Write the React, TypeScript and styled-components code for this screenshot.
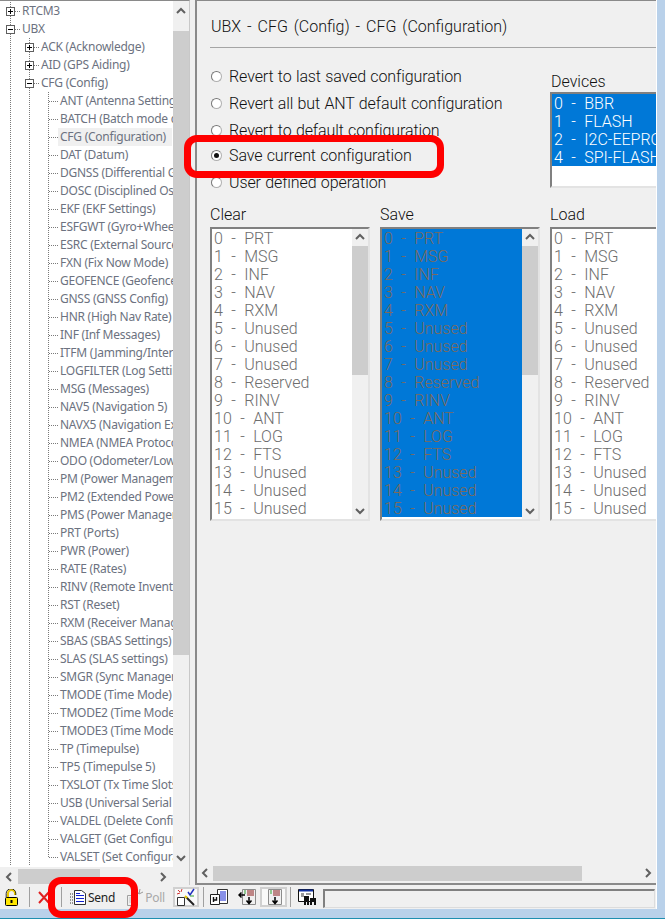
import React from 'react';
import styled, { createGlobalStyle } from 'styled-components';

const GlobalStyle = createGlobalStyle`
  html, body {
    margin: 0;
    padding: 0;
    background: #f0f0f0;
  }
  * {
    box-sizing: border-box;
  }
`;

const TREE_ITEMS = [
  'ANT (Antenna Settings)', 'BATCH (Batch mode configuration)', 'CFG (Configuration)', 'DAT (Datum)',
  'DGNSS (Differential GNSS configuration)', 'DOSC (Disciplined Oscillator)', 'EKF (EKF Settings)',
  'ESFGWT (Gyro+Wheel Tick)', 'ESRC (External Source Config)', 'FXN (Fix Now Mode)',
  'GEOFENCE (Geofence Config)', 'GNSS (GNSS Config)', 'HNR (High Nav Rate)', 'INF (Inf Messages)',
  'ITFM (Jamming/Interference)', 'LOGFILTER (Log Settings)', 'MSG (Messages)', 'NAV5 (Navigation 5)',
  'NAVX5 (Navigation Expert 5)', 'NMEA (NMEA Protocol)', 'ODO (Odometer/Low-Speed)',
  'PM (Power Management)', 'PM2 (Extended Power Management)', 'PMS (Power Management Setup)',
  'PRT (Ports)', 'PWR (Power)', 'RATE (Rates)', 'RINV (Remote Inventory)', 'RST (Reset)',
  'RXM (Receiver Manager)', 'SBAS (SBAS Settings)', 'SLAS (SLAS settings)', 'SMGR (Sync Manager)',
  'TMODE (Time Mode)', 'TMODE2 (Time Mode 2)', 'TMODE3 (Time Mode 3)', 'TP (Timepulse)',
  'TP5 (Timepulse 5)', 'TXSLOT (Tx Time Slots)', 'USB (Universal Serial Bus)',
  'VALDEL (Delete Configuration)', 'VALGET (Get Configuration)', 'VALSET (Set Configuration)',
];

const LAYERS = [
  '0 - PRT', '1 - MSG', '2 - INF', '3 - NAV', '4 - RXM', '5 - Unused', '6 - Unused', '7 - Unused',
  '8 - Reserved', '9 - RINV', '10 - ANT', '11 - LOG', '12 - FTS', '13 - Unused', '14 - Unused',
  '15 - Unused', '16 - Reserved',
];

const DEVICES = ['0 - BBR', '1 - FLASH', '2 - I2C-EEPROM', '4 - SPI-FLASH'];

const RADIOS = [
  'Revert to last saved configuration',
  'Revert all but ANT default configuration',
  'Revert to default configuration',
  'Save current configuration',
  'User defined operation',
];

const Screen = styled.div`
  position: relative;
  width: 665px;
  height: 919px;
  overflow: hidden;
  display: flex;
  flex-direction: column;
  background: #b9d1ea;
  border-bottom: 1px solid #1f8fb0;
`;

const Workspace = styled.div`
  width: 657px;
  height: 909px;
  display: flex;
  flex-direction: column;
  background: #f0f0f0;
  border-right: 1px solid #ffffff;
`;

const Panes = styled.div`
  height: 885px;
  display: flex;
`;

const TreePane = styled.div`
  width: 190px;
  display: flex;
  flex-direction: column;
  border-top: 1px solid #8a8a8a;
  border-right: 1px solid #c8c8c8;
`;

const TreeBody = styled.div`
  flex: 1;
  display: flex;
  min-height: 0;
`;

const TreeList = styled.div`
  width: 173px;
  height: 866px;
  padding: 1px 0 0 1px;
  overflow: hidden;
  background: #ffffff;
  font-family: 'Noto Sans', sans-serif;
  font-size: 12px;
  letter-spacing: -0.25px;
  color: #6c7280;
`;

const TreeRow = styled.div`
  height: 18px;
  display: flex;
  align-items: center;
  white-space: nowrap;
`;

const TreeLabel = styled.span<{ $selected?: boolean }>`
  height: 18px;
  line-height: 18px;
  padding: 0 6px 0 2px;
  background: ${({ $selected }) => ($selected ? '#f0f0f0' : 'transparent')};
`;

const ContentPane = styled.div`
  margin-left: 5px;
  width: 461px;
  display: flex;
  flex-direction: column;
  border-top: 1px solid #8a8a8a;
  border-left: 2px solid #8a8a8a;
  border-bottom: 2px solid #8a8a8a;
`;

const ContentBody = styled.div`
  flex: 1;
  min-height: 0;
  overflow: hidden;
  padding-left: 13px;
  font-family: 'Roboto', 'Liberation Sans', sans-serif;
  font-weight: 300;
  font-size: 16px;
  word-spacing: 2px;
  color: #111111;
`;

const Title = styled.div`
  height: 47px;
  padding: 16px 0 0 1px;
  line-height: 20px;
  border-bottom: 1px solid #a5a5a5;
  white-space: nowrap;
`;

const OptionsRow = styled.div`
  height: 157px;
  display: flex;
`;

const RadioGroup = styled.div`
  width: 340px;
  flex: none;
  padding-top: 15px;
  letter-spacing: -0.1px;
  word-spacing: 0.5px;
`;

const RadioRow = styled.div<{ $shift?: number }>`
  height: 27px;
  margin-top: ${({ $shift }) => $shift ?? 0}px;
  display: flex;
  align-items: center;
  gap: 7px;
  padding-left: 1px;
  white-space: nowrap;
`;

const RadioDot = styled.span<{ $checked?: boolean }>`
  width: 11px;
  height: 11px;
  flex: none;
  display: flex;
  align-items: center;
  justify-content: center;
  border-radius: 50%;
  background: #ffffff;
  border: 1px solid #b0b0b0;
  border-top-color: #777777;
  border-left-color: #777777;

  &::after {
    content: '';
    width: 5px;
    height: 5px;
    border-radius: 50%;
    background: ${({ $checked }) => ($checked ? '#111111' : 'transparent')};
  }
`;

const DevicesColumn = styled.div`
  flex: none;
  padding-top: 24px;
`;

const FieldLabel = styled.div`
  height: 20px;
  line-height: 20px;
  padding-left: 1px;
  white-space: nowrap;
`;

const DevicesBox = styled.div`
  width: 160px;
  height: 96px;
  background: #ffffff;
  border-left: 2px solid #808080;
  border-top: 2px solid #808080;
  border-bottom: 2px solid #e3e3e3;
  word-spacing: 4.5px;
`;

const ListsRow = styled.div`
  display: grid;
  grid-template-columns: repeat(3, 160px);
  column-gap: 10px;
`;

const ListColumn = styled.div`
  width: 160px;
`;

const ColumnLabel = styled.div`
  height: 22px;
  line-height: 20px;
  white-space: nowrap;
`;

const ListBox = styled.div`
  height: 294px;
  display: flex;
  overflow: hidden;
  background: #ffffff;
  border-left: 2px solid #808080;
  border-top: 2px solid #808080;
  border-right: 2px solid #e3e3e3;
  border-bottom: 2px solid #e3e3e3;
  word-spacing: 4.5px;
`;

const ListItems = styled.div`
  flex: 1;
  min-width: 0;
  overflow: hidden;
`;

const ListItem = styled.div<{ $selected?: boolean; $tone?: string }>`
  height: 18px;
  line-height: 20px;
  padding-left: 2px;
  white-space: nowrap;
  overflow: hidden;
  color: ${({ $tone }) => $tone ?? '#6d6d6d'};
  background: ${({ $selected }) => ($selected ? '#0078d7' : 'transparent')};
`;

const VScroll = styled.div`
  width: 16px;
  flex: none;
  display: flex;
  flex-direction: column;
  align-items: center;
  background: #f0f0f0;
`;

const VThumb = styled.div<{ $top: number; $size: number }>`
  width: 100%;
  height: ${({ $size }) => $size}px;
  margin-top: ${({ $top }) => $top}px;
  background: #cdcdcd;
`;

const VTrackEnd = styled.div`
  flex: 1;
`;

const ArrowCell = styled.div<{ $w?: number; $h?: number }>`
  width: ${({ $w }) => $w ?? 16}px;
  height: ${({ $h }) => $h ?? 16}px;
  flex: none;
  display: flex;
  align-items: center;
  justify-content: center;
`;

const HScroll = styled.div<{ $height: number }>`
  height: ${({ $height }) => $height}px;
  flex: none;
  display: flex;
  align-items: center;
  background: #f0f0f0;
`;

const HThumb = styled.div<{ $left: number; $size: number }>`
  height: 15px;
  width: ${({ $size }) => $size}px;
  margin-left: ${({ $left }) => $left}px;
  background: #cdcdcd;
`;

const HSpacer = styled.div`
  flex: 1;
`;

const Toolbar = styled.div`
  height: 24px;
  display: flex;
  align-items: center;
  font-family: 'Noto Sans', sans-serif;
  font-size: 12px;
  letter-spacing: -0.25px;
  color: #222222;
`;

const ToolSeparator = styled.div<{ $left: number }>`
  width: 1px;
  height: 20px;
  flex: none;
  margin-left: ${({ $left }) => $left}px;
  background: #a0a0a0;
`;

const ToolIcon = styled.div<{ $left: number }>`
  flex: none;
  margin-left: ${({ $left }) => $left}px;
  display: flex;
  align-items: center;
`;

const ToolLabel = styled.span<{ $muted?: boolean }>`
  margin-left: 2px;
  color: ${({ $muted }) => ($muted ? '#a8a8a8' : '#222222')};
`;

const ToggleButton = styled.div<{ $left: number; $width: number }>`
  flex: none;
  width: ${({ $width }) => $width}px;
  height: 20px;
  margin-left: ${({ $left }) => $left}px;
  display: flex;
  align-items: center;
  justify-content: center;
  background: #f9f9f9;
  border: 2px solid #d0d0d0;
`;

const StatusField = styled.div`
  flex: none;
  width: 332px;
  height: 19px;
  margin-left: 6px;
  margin-top: 3px;
  background: #f0f0f0;
  border-top: 2px solid #808080;
  border-left: 2px solid #808080;
  border-right: 1px solid #dcdcdc;
  border-bottom: 1px solid #dcdcdc;
`;

const Callout = styled.div<{ $left: number; $top: number; $width: number; $height: number }>`
  position: absolute;
  left: ${({ $left }) => $left}px;
  top: ${({ $top }) => $top}px;
  width: ${({ $width }) => $width}px;
  height: ${({ $height }) => $height}px;
  border: 7px solid #ff0000;
  border-radius: 13px;
  pointer-events: none;
`;

function Chevron({ dir }: { dir: 'up' | 'down' | 'left' | 'right' }) {
  const rotate = { up: 0, right: 90, down: 180, left: 270 }[dir];
  return (
    <svg width="10" height="10" viewBox="0 0 10 10" style={{ transform: `rotate(${rotate}deg)` }}>
      <polyline points="1,7 5,3 9,7" fill="none" stroke="#606060" strokeWidth="2" />
    </svg>
  );
}

type GlyphKind = 'line' | 'tee' | 'corner' | 'plus' | 'minus';

function TreeGlyph({ kind }: { kind: GlyphKind }) {
  const dots = { stroke: '#7a7a7a', strokeWidth: 1, strokeDasharray: '1 1' };
  const isBox = kind === 'plus' || kind === 'minus';
  return (
    <svg width="19" height="18" viewBox="0 0 19 18" style={{ flex: 'none', display: 'block' }}>
      {kind !== 'corner' && <line x1="9.5" y1="0" x2="9.5" y2="18" {...dots} />}
      {kind === 'corner' && <line x1="9.5" y1="0" x2="9.5" y2="9" {...dots} />}
      {kind !== 'line' && <line x1="10" y1="9.5" x2="19" y2="9.5" {...dots} />}
      {isBox && (
        <>
          <rect x="5.5" y="5.5" width="8" height="8" fill="#ffffff" stroke="#5f5f5f" />
          <line x1="7" y1="9.5" x2="12" y2="9.5" stroke="#000000" />
          {kind === 'plus' && <line x1="9.5" y1="7" x2="9.5" y2="12" stroke="#000000" />}
        </>
      )}
    </svg>
  );
}

function LockIcon() {
  return (
    <svg width="14" height="17" viewBox="0 0 14 17">
      <path d="M3 8V4.5a3.5 3.5 0 0 1 7 0V6" fill="none" stroke="#e8c800" strokeWidth="2" />
      <path d="M1.2 8V4.5a4.8 4.8 0 0 1 9.6 0V6" fill="none" stroke="#000000" strokeWidth="0.8" />
      <rect x="0.5" y="8.5" width="12" height="8" rx="1" fill="#ffe600" stroke="#000000" />
      <rect x="5.5" y="11" width="2" height="3" fill="#000000" />
    </svg>
  );
}

function CrossIcon() {
  return (
    <svg width="12" height="13" viewBox="0 0 12 13">
      <path d="M1 1l10 11M11 1L1 12" stroke="#e02020" strokeWidth="2" fill="none" />
    </svg>
  );
}

function SendIcon() {
  return (
    <svg width="16" height="15" viewBox="0 0 16 15">
      <path d="M0 4h3M0 7h3M0 10h3M0 13h3" stroke="#333333" strokeDasharray="1 1" />
      <path d="M4.5 0.5h7l4 3v11h-11z" fill="#ffffff" stroke="#333333" />
      <path d="M6 3.5h4M6 5.5h8M6 8.5h8M6 11.5h8" stroke="#1020d0" />
    </svg>
  );
}

function PollIcon() {
  return (
    <svg width="16" height="17" viewBox="0 0 16 17">
      <path d="M0.5 6.5h9v10h-9z" fill="#f0f0f0" stroke="#a0a0a0" />
      <path d="M2 9h6M2 11h6M2 13h6" stroke="#c4c4c4" />
      <path d="M9 1l3 4M13 0l-1 5M16 3l-4 2" stroke="#989898" />
    </svg>
  );
}

function WizardIcon() {
  return (
    <svg width="20" height="18" viewBox="0 0 20 18">
      <path d="M1.5 9.5h7v8h-7z" fill="#ffffff" stroke="#333333" />
      <path d="M10 9l8 8" stroke="#222222" strokeWidth="2" />
      <path d="M9 8l2 2" stroke="#e8c800" strokeWidth="2" />
      <path d="M2 2l2 2M6 1l-1 3M1 6l3-1" stroke="#d03030" />
      <path d="M12 4l2 3 4-6" stroke="#2030c0" strokeWidth="1.5" fill="none" />
      <path d="M14 8h4" stroke="#30a030" />
    </svg>
  );
}

function PagesIcon() {
  return (
    <svg width="18" height="16" viewBox="0 0 18 16">
      <path d="M7.5 0.5h10v14h-10z" fill="#ffffff" stroke="#333333" />
      <path d="M10 3h6M10 5h6M10 7h6M10 9h6M10 11h6" stroke="#1020d0" />
      <path d="M0.5 5.5h9v10h-9z" fill="#ffffff" stroke="#222222" />
      <path d="M3.5 8v5M3.5 11h3V8" stroke="#111111" strokeWidth="1.4" fill="none" />
    </svg>
  );
}

function ListArrowIcon({ framed }: { framed?: boolean }) {
  return (
    <svg width="18" height="16" viewBox="0 0 18 16">
      <path d="M4.5 0.5h13v15h-13z" fill="#f0f0f0" stroke="#8c8c8c" />
      <path d="M9 2h7M9 4h7M9 6h7" stroke="#8c1c1c" />
      <path d="M6 2h2M6 4h2" stroke="#30a030" />
      <path d="M11 8v6M8.5 11.5l2.5 3 2.5-3" stroke="#000000" strokeWidth="1.5" fill="none" />
      {!framed && <path d="M7 6H1M3.5 3.5L1 6l2.5 2.5" stroke="#000000" strokeWidth="1.5" fill="none" />}
    </svg>
  );
}

function DatabaseIcon() {
  return (
    <svg width="19" height="17" viewBox="0 0 19 17">
      <path d="M0.5 0.5h15v12h-15z" fill="#ffffff" stroke="#111111" />
      <path d="M1 1.5h14" stroke="#1030a0" strokeWidth="2" />
      <path d="M3 5h3M3 7h3M8 5h5" stroke="#333333" />
      <path d="M6 7h5v9H9v-3H8v3H6zM12 9h6v7h-2v-3h-2v3h-2z" fill="#111111" />
    </svg>
  );
}

function Tree() {
  return (
    <TreeList>
      <TreeRow>
        <TreeGlyph kind="plus" />
        <TreeLabel>RTCM3</TreeLabel>
      </TreeRow>
      <TreeRow>
        <TreeGlyph kind="minus" />
        <TreeLabel>UBX</TreeLabel>
      </TreeRow>
      <TreeRow>
        <TreeGlyph kind="line" />
        <TreeGlyph kind="plus" />
        <TreeLabel>ACK (Acknowledge)</TreeLabel>
      </TreeRow>
      <TreeRow>
        <TreeGlyph kind="line" />
        <TreeGlyph kind="plus" />
        <TreeLabel>AID (GPS Aiding)</TreeLabel>
      </TreeRow>
      <TreeRow>
        <TreeGlyph kind="line" />
        <TreeGlyph kind="minus" />
        <TreeLabel>CFG (Config)</TreeLabel>
      </TreeRow>
      {TREE_ITEMS.map((item, index) => (
        <TreeRow key={item}>
          <TreeGlyph kind="line" />
          <TreeGlyph kind="line" />
          <TreeGlyph kind={index === TREE_ITEMS.length - 1 ? 'corner' : 'tee'} />
          <TreeLabel $selected={item.startsWith('CFG')}>{item}</TreeLabel>
        </TreeRow>
      ))}
    </TreeList>
  );
}

function ListScroll() {
  return (
    <VScroll>
      <ArrowCell><Chevron dir="up" /></ArrowCell>
      <VThumb $top={1} $size={129} />
      <VTrackEnd />
      <ArrowCell><Chevron dir="down" /></ArrowCell>
    </VScroll>
  );
}

function App() {
  return (
    <Screen>
      <GlobalStyle />
      <Workspace>
        <Panes>
          <TreePane>
            <TreeBody>
              <Tree />
              <VScroll>
                <ArrowCell $h={20}><Chevron dir="up" /></ArrowCell>
                <VThumb $top={10} $size={624} />
                <VTrackEnd />
                <ArrowCell $h={20}><Chevron dir="down" /></ArrowCell>
              </VScroll>
            </TreeBody>
            <HScroll $height={17}>
              <ArrowCell $w={18}><Chevron dir="left" /></ArrowCell>
              <HThumb $left={0} $size={82} />
              <HSpacer />
              <ArrowCell $w={52}><Chevron dir="right" /></ArrowCell>
            </HScroll>
          </TreePane>
          <ContentPane>
            <ContentBody>
              <Title>UBX - CFG (Config) - CFG (Configuration)</Title>
              <OptionsRow>
                <RadioGroup>
                  {RADIOS.map((label, index) => (
                    <RadioRow key={label} $shift={index === 3 ? -2 : 0}>
                      <RadioDot $checked={index === 3} />
                      {label}
                    </RadioRow>
                  ))}
                </RadioGroup>
                <DevicesColumn>
                  <FieldLabel>Devices</FieldLabel>
                  <DevicesBox>
                    {DEVICES.map((device) => (
                      <ListItem key={device} $selected $tone="#ffffff">{device}</ListItem>
                    ))}
                  </DevicesBox>
                </DevicesColumn>
              </OptionsRow>
              <ListsRow>
                <ListColumn>
                  <ColumnLabel>Clear</ColumnLabel>
                  <ListBox>
                    <ListItems>
                      {LAYERS.map((layer) => <ListItem key={layer}>{layer}</ListItem>)}
                    </ListItems>
                    <ListScroll />
                  </ListBox>
                </ListColumn>
                <ListColumn>
                  <ColumnLabel>Save</ColumnLabel>
                  <ListBox>
                    <ListItems>
                      {LAYERS.map((layer, index) => (
                        <ListItem key={layer} $selected={index < 16} $tone={index < 16 ? '#7d6a5c' : undefined}>
                          {layer}
                        </ListItem>
                      ))}
                    </ListItems>
                    <ListScroll />
                  </ListBox>
                </ListColumn>
                <ListColumn>
                  <ColumnLabel>Load</ColumnLabel>
                  <ListBox>
                    <ListItems>
                      {LAYERS.map((layer) => <ListItem key={layer}>{layer}</ListItem>)}
                    </ListItems>
                  </ListBox>
                </ListColumn>
              </ListsRow>
            </ContentBody>
            <HScroll $height={20}>
              <ArrowCell><Chevron dir="left" /></ArrowCell>
              <HThumb $left={0} $size={369} />
              <HSpacer />
              <ArrowCell><Chevron dir="right" /></ArrowCell>
            </HScroll>
          </ContentPane>
        </Panes>
        <Toolbar>
          <ToolIcon $left={5}><LockIcon /></ToolIcon>
          <ToolSeparator $left={10} />
          <ToolIcon $left={8}><CrossIcon /></ToolIcon>
          <ToolSeparator $left={11} />
          <ToolIcon $left={8}><SendIcon /><ToolLabel>Send</ToolLabel></ToolIcon>
          <ToolIcon $left={12}><PollIcon /><ToolLabel $muted>Poll</ToolLabel></ToolIcon>
          <ToggleButton $left={8} $width={26}><WizardIcon /></ToggleButton>
          <ToolSeparator $left={4} />
          <ToolIcon $left={6}><PagesIcon /></ToolIcon>
          <ToolIcon $left={10}><ListArrowIcon /></ToolIcon>
          <ToggleButton $left={4} $width={27}><ListArrowIcon framed /></ToggleButton>
          <ToolSeparator $left={3} />
          <ToolIcon $left={7}><DatabaseIcon /></ToolIcon>
          <StatusField />
        </Toolbar>
      </Workspace>
      <Callout $left={184} $top={135} $width={260} $height={43} />
      <Callout $left={48} $top={877} $width={90} $height={41} />
    </Screen>
  );
}

export default App;
